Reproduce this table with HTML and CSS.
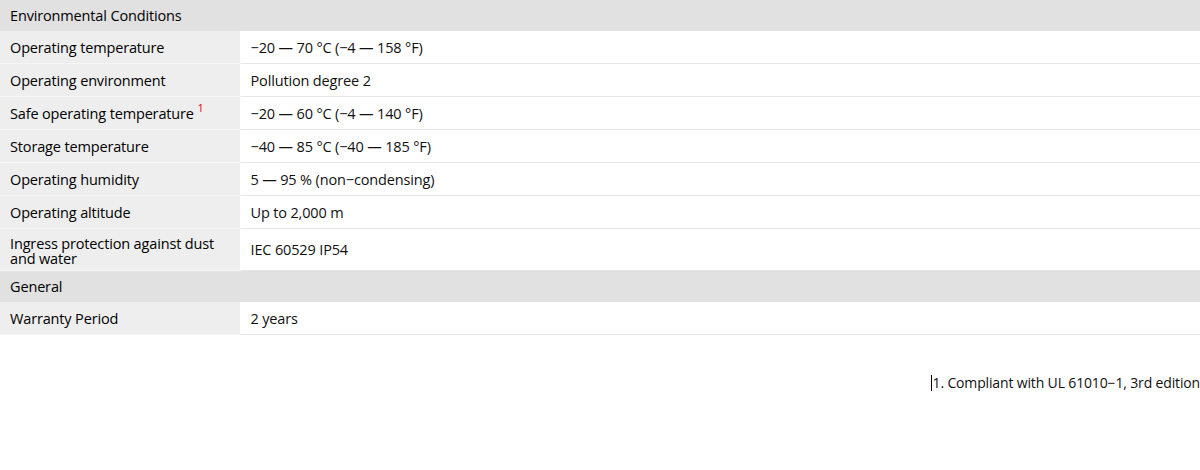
FILE: index.html
```html
<!DOCTYPE html>
<html>
<head>
<meta charset="utf-8">
<link rel="stylesheet" href="styles.css">
</head>
<body>
<table class="spec">
  <colgroup><col class="c-label"><col class="c-value"></colgroup>
  <tr class="group"><th colspan="2">Environmental Conditions</th></tr>
  <tr><td class="label">Operating temperature</td><td class="value">−20 — 70 °C (−4 — 158 °F)</td></tr>
  <tr><td class="label">Operating environment</td><td class="value">Pollution degree 2</td></tr>
  <tr><td class="label">Safe operating temperature <sup class="fn">1</sup></td><td class="value">−20 — 60 °C (−4 — 140 °F)</td></tr>
  <tr><td class="label">Storage temperature</td><td class="value">−40 — 85 °C (−40 — 185 °F)</td></tr>
  <tr><td class="label">Operating humidity</td><td class="value">5 — 95 % (non−condensing)</td></tr>
  <tr><td class="label">Operating altitude</td><td class="value">Up to 2,000 m</td></tr>
  <tr><td class="label multi">Ingress protection against dust and water</td><td class="value">IEC 60529 IP54</td></tr>
  <tr class="group"><th colspan="2">General</th></tr>
  <tr><td class="label">Warranty Period</td><td class="value">2 years</td></tr>
</table>
<div class="notes"><p class="note">1. Compliant with UL 61010−1, 3rd edition</p></div>
</body>
</html>
```
FILE: styles.css
```css
html, body { margin: 0; padding: 0; background: #fff; }
body { font-family: "Open Sans", "Noto Sans", sans-serif; color: #111; width: 1200px; letter-spacing: -0.15px; }
.spec { width: 1200px; border-collapse: collapse; table-layout: fixed; }
.c-label { width: 240px; }
.spec th, .spec td { padding: 0 10px; font-size: 14.5px; font-weight: 400; text-align: left; vertical-align: middle; }
.group th { background: #e1e1e1; height: 31px; line-height: 31px; color: #000; }
.spec td { height: 32px; border-bottom: 1px solid #e6e6e6; }
.label { background: #eeeeee; border-right: 1px solid #fff; color: #000; line-height: 15px; }
.spec td.label { border-bottom-color: #f5f5f5; }
.label.multi { height: 39px; padding-right: 14px; padding-top: 2px; }
.value { background: #fff; color: #111; }
.fn { color: #e00; font-size: 11px; vertical-align: top; position: relative; top: -4px; line-height: 1; }
.notes { display: flex; justify-content: flex-end; padding-top: 40px; }
.note { margin: 0; font-size: 14px; color: #111; border-left: 1px solid #000; padding-left: 1px; line-height: 16px; }
```
